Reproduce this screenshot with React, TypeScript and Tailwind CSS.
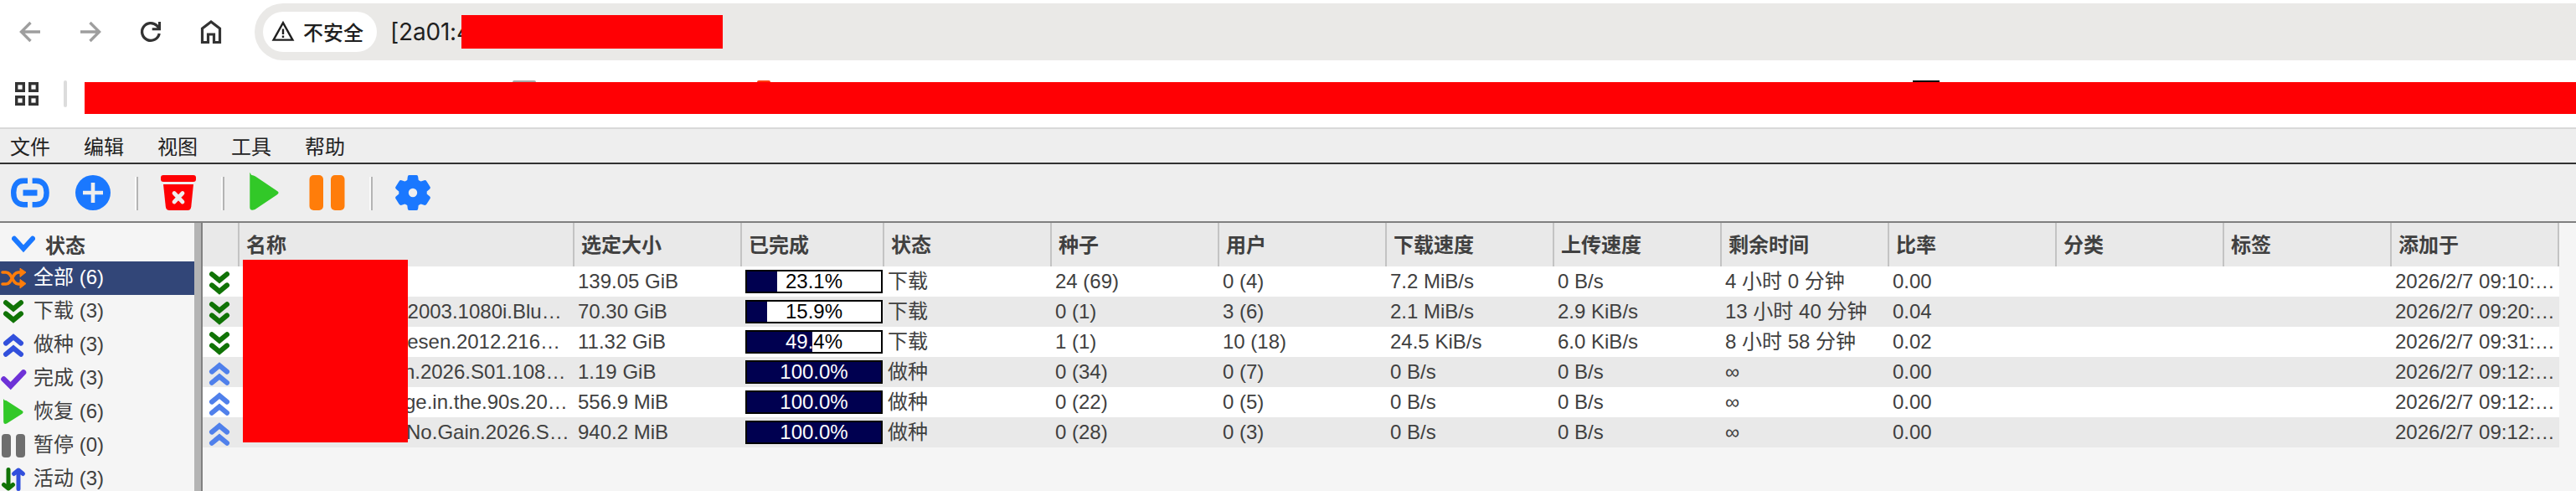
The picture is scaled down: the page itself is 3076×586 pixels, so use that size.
import type { ReactNode } from "react";

const MENUS = ["文件", "编辑", "视图", "工具", "帮助"];

type Torrent = {
  name: string;
  nameEnd: number;
  size: string;
  done: number;
  seeding: boolean;
  seeds: string;
  peers: string;
  down: string;
  up: string;
  eta: string;
  ratio: string;
  added: string;
};

const TORRENTS: Torrent[] = [
  { name: "", nameEnd: 8, size: "139.05 GiB", done: 23.1, seeding: false, seeds: "24 (69)", peers: "0 (4)", down: "7.2 MiB/s", up: "0 B/s", eta: "4 小时 0 分钟", ratio: "0.00", added: "2026/2/7 09:10:…" },
  { name: "2003.1080i.Blu…", nameEnd: 15.3, size: "70.30 GiB", done: 15.9, seeding: false, seeds: "0 (1)", peers: "3 (6)", down: "2.1 MiB/s", up: "2.9 KiB/s", eta: "13 小时 40 分钟", ratio: "0.04", added: "2026/2/7 09:20:…" },
  { name: "esen.2012.216…", nameEnd: 17, size: "11.32 GiB", done: 49.4, seeding: false, seeds: "1 (1)", peers: "10 (18)", down: "24.5 KiB/s", up: "6.0 KiB/s", eta: "8 小时 58 分钟", ratio: "0.02", added: "2026/2/7 09:31:…" },
  { name: "n.2026.S01.108…", nameEnd: 10.6, size: "1.19 GiB", done: 100, seeding: true, seeds: "0 (34)", peers: "0 (7)", down: "0 B/s", up: "0 B/s", eta: "∞", ratio: "0.00", added: "2026/2/7 09:12:…" },
  { name: "ge.in.the.90s.20…", nameEnd: 8.2, size: "556.9 MiB", done: 100, seeding: true, seeds: "0 (22)", peers: "0 (5)", down: "0 B/s", up: "0 B/s", eta: "∞", ratio: "0.00", added: "2026/2/7 09:12:…" },
  { name: "No.Gain.2026.S…", nameEnd: 6.2, size: "940.2 MiB", done: 100, seeding: true, seeds: "0 (28)", peers: "0 (3)", down: "0 B/s", up: "0 B/s", eta: "∞", ratio: "0.00", added: "2026/2/7 09:12:…" },
];

const HEADERS = ["", "名称", "选定大小", "已完成", "状态", "种子", "用户", "下载速度", "上传速度", "剩余时间", "比率", "分类", "标签", "添加于"];

const COLS =
  "grid w-[2814px] grid-cols-[44px_400px_200px_170px_200px_200px_200px_200px_200px_200px_200px_200px_200px_200px]";

function Svg({ w, h, children, className = "" }: { w: number; h: number; children: ReactNode; className?: string }) {
  return (
    <svg width={w} height={h} viewBox={`0 0 ${w} ${h}`} fill="none" className={`block shrink-0 ${className}`}>
      {children}
    </svg>
  );
}

function DoubleDown({ color }: { color: string }) {
  return (
    <Svg w={32} h={32}>
      <g stroke={color} strokeWidth="6" strokeLinecap="round">
        <path d="M7 5.2 L16 12.6 L25 5.2" />
        <path d="M7 18.4 L16 25.8 L25 18.4" />
      </g>
    </Svg>
  );
}

function DoubleUp({ color }: { color: string }) {
  return (
    <Svg w={32} h={32}>
      <g stroke={color} strokeWidth="6" strokeLinecap="round">
        <path d="M7 13.6 L16 6.2 L25 13.6" />
        <path d="M7 26.8 L16 19.4 L25 26.8" />
      </g>
    </Svg>
  );
}

function BrowserBar() {
  return (
    <div className="flex h-[76px] items-start bg-white pt-1">
      <div className="flex h-[68px] w-[304px] shrink-0 items-center gap-10 pl-[20px]">
        <Svg w={32} h={32}>
          <path d="M28 16 H6 M16.5 5 L5.5 16 L16.5 27" stroke="#9e9e9e" strokeWidth="3.4" />
        </Svg>
        <Svg w={32} h={32}>
          <path d="M4 16 H26 M15.5 5 L26.5 16 L15.5 27" stroke="#9e9e9e" strokeWidth="3.4" />
        </Svg>
        <Svg w={32} h={32}>
          <path d="M26.2 18 A10.4 10.4 0 1 1 23.4 8.7 L26.5 12" stroke="#333" strokeWidth="3.3" />
          <path d="M28 4 V14.3 H17.7 V11.3 H25 V4 Z" fill="#333" />
        </Svg>
        <Svg w={32} h={32}>
          <path d="M5.5 28.5 V12 L16 4 L26.5 12 V28.5 H19.5 V19 H12.5 V28.5 Z" stroke="#333" strokeWidth="3.2" />
        </Svg>
      </div>
      <div className="flex h-[68px] flex-1 items-center rounded-l-full bg-[#eae9e7] pl-[10px]">
        <div className="flex h-12 w-[136px] items-center rounded-full bg-white pl-[10px]">
          <Svg w={28} h={28} className="mr-[10px] -mt-[2px]">
            <path d="M2.6 24.6 L14 4.2 L25.4 24.6 Z" stroke="#1f1f1f" strokeWidth="2.4" />
            <path d="M14 11.5 V18 M14 19.6 V22" stroke="#1f1f1f" strokeWidth="2.4" />
          </Svg>
          <span className="whitespace-nowrap font-['Noto_Sans_CJK_SC',sans-serif] text-[24px] font-medium leading-[36px] text-[#1f1f1f]">
            不安全
          </span>
        </div>
        <div className="relative ml-[16px] w-[397px] font-[Inter,sans-serif] text-[28px] leading-[40px] tracking-[-0.2px] text-[#1f1f1f]">
          [2a01:4
          <div className="absolute left-[85px] top-0 h-10 w-[312px] bg-[#ff0004]" />
        </div>
      </div>
    </div>
  );
}

function BookmarkBar() {
  return (
    <div className="relative flex h-[78px] items-start border-b-2 border-[#d9d9d9] bg-white pl-[18px] pt-5">
      <Svg w={28} h={32}>
        <g stroke="#333" strokeWidth="3.4">
          <rect x="1.7" y="3.7" width="8.6" height="8.6" />
          <rect x="17.7" y="3.7" width="8.6" height="8.6" />
          <rect x="1.7" y="19.7" width="8.6" height="8.6" />
          <rect x="17.7" y="19.7" width="8.6" height="8.6" />
        </g>
      </Svg>
      <div className="ml-[30px] h-8 w-1 rounded-full bg-[#dcdcdc]" />
      <div className="ml-[21px] mt-[2px] h-[38px] flex-1 bg-[#ff0004]" />
      <div className="absolute left-[612px] top-5 h-[2px] w-[28px] rounded-t bg-[#a6a6a6]" />
      <div className="absolute left-[904px] top-5 h-[2px] w-[16px] rounded-t-full bg-[#ff3c10]" />
      <div className="absolute left-[2284px] top-5 h-[2px] w-[32px] bg-black" />
    </div>
  );
}

function Divider() {
  return <div className="h-10 w-1 shrink-0 border-l-2 border-r-2 border-l-[#fafafa] border-r-[#b4b4b4]" />;
}

function Toolbar() {
  return (
    <div className="flex h-[70px] items-start border-b-2 border-[#808080] bg-[#eee] pt-2">
      <Svg w={48} h={48} className="ml-3">
        <path d="M21 11.8 H16 C8 11.8 4.2 18 4.2 26 C4.2 34 8 40.2 16 40.2 H21" stroke="#1a78ff" strokeWidth="6.4" />
        <path d="M26.6 11.8 H31 C39.5 11.8 43.6 18 43.6 26 C43.6 34 39.5 40.2 31 40.2 H26.6" stroke="#1a78ff" strokeWidth="6.4" />
        <rect x="15.5" y="22.6" width="17" height="7" fill="#1a78ff" />
      </Svg>
      <Svg w={44} h={48} className="ml-[29px]">
        <circle cx="22" cy="26" r="21" fill="#1a78ff" />
        <path d="M10 26 H34 M22 14 V38" stroke="#eee" strokeWidth="4.6" />
      </Svg>
      <div className="ml-[28px] mt-[7px]">
        <Divider />
      </div>
      <Svg w={44} h={48} className="ml-[26px]">
        <rect x="1" y="5" width="42" height="8" rx="3" fill="#ff0004" />
        <path d="M4 16 H40 L37.3 42.5 Q36.8 47 33 47 H11.5 Q7.3 47 6.8 42.5 Z" fill="#ff0004" />
        <path d="M17 26.5 L27 37 M27 26.5 L17 37" stroke="#eee" strokeWidth="4.8" strokeLinecap="round" />
      </Svg>
      <div className="ml-[29px] mt-[7px]">
        <Divider />
      </div>
      <Svg w={38} h={48} className="ml-[28px]">
        <path d="M2.3 1.8 L4.3 5 Q6.5 4.8 9 6.5 L35 24 Q38.2 26 35 28.2 L8.5 46 Q2.6 48.5 2.3 43.5 Z" fill="#32c828" />
      </Svg>
      <Svg w={44} h={48} className="ml-[34px]">
        <rect x="1.5" y="5" width="16.5" height="42" rx="5" fill="#ff7d0a" />
        <rect x="27" y="5" width="16.5" height="42" rx="5" fill="#ff7d0a" />
      </Svg>
      <div className="ml-[29px] mt-[7px]">
        <Divider />
      </div>
      <Svg w={44} h={48} className="ml-[26px]">
        <path
          fillRule="evenodd"
          fill="#1a78ff"
          d="M17.5 5 H26.5 Q28 5 28.2 7 L28.7 11 L31.5 12.6 L35.5 11.2 Q37.5 10.8 38.5 12.5 L42.6 19 Q43.4 20.5 42 21.7 L38.7 24.4 V27.6 L42 30.3 Q43.4 31.5 42.6 33 L38.5 39.5 Q37.5 41.2 35.5 40.8 L31.5 39.4 L28.7 41 L28.2 45 Q28 47 26.5 47 H17.5 Q16 47 15.8 45 L15.3 41 L12.5 39.4 L8.5 40.8 Q6.5 41.2 5.5 39.5 L1.4 33 Q0.6 31.5 2 30.3 L5.3 27.6 V24.4 L2 21.7 Q0.6 20.5 1.4 19 L5.5 12.5 Q6.5 10.8 8.5 11.2 L12.5 12.6 L15.3 11 L15.8 7 Q16 5 17.5 5 Z M22 20.8 A5.2 5.2 0 1 0 22 31.2 A5.2 5.2 0 1 0 22 20.8 Z"
        />
      </Svg>
    </div>
  );
}

const FILTERS: { label: string; icon: ReactNode }[] = [
  {
    label: "全部 (6)",
    icon: (
      <Svg w={32} h={32}>
        <g stroke="#ff7d0a" strokeWidth="3.6" strokeLinecap="round">
          <path d="M3 9 H7 C15 9 14 23 22 23 H26" />
          <path d="M3 23 H7 C15 23 14 9 22 9 H26" />
        </g>
        <path d="M24 4.2 L31 9 L24 14.5 Z M24 17.5 L31 22.5 L24 28 Z" fill="#ff7d0a" stroke="#ff7d0a" strokeLinejoin="round" />
      </Svg>
    ),
  },
  { label: "下载 (3)", icon: <DoubleDown color="#107306" /> },
  { label: "做种 (3)", icon: <DoubleUp color="#3250dc" /> },
  {
    label: "完成 (3)",
    icon: (
      <Svg w={32} h={32}>
        <path d="M4.5 16.5 L12.7 24.5 L28 8.5" stroke="#6e32d7" strokeWidth="6.6" strokeLinecap="round" />
      </Svg>
    ),
  },
  {
    label: "恢复 (6)",
    icon: (
      <Svg w={32} h={32}>
        <path d="M4 0 L5.5 1.8 Q7.5 1.8 9 3 L26.5 14.3 Q28.7 16 26.5 17.7 L8 29.5 Q4.3 31 4.2 27.5 Z" fill="#32c828" />
      </Svg>
    ),
  },
  {
    label: "暂停 (0)",
    icon: (
      <Svg w={32} h={32}>
        <rect x="2" y="2" width="11" height="28" rx="4" fill="#6e6e6e" />
        <rect x="19" y="2" width="11" height="28" rx="4" fill="#6e6e6e" />
      </Svg>
    ),
  },
  {
    label: "活动 (3)",
    icon: (
      <Svg w={32} h={32}>
        <path d="M10 4.5 V26 M4.5 22.5 L10 27 L15.5 22.5" stroke="#107306" strokeWidth="5" strokeLinecap="round" strokeLinejoin="round" />
        <path d="M22 27.5 V6 M16.5 9.5 L22 5 L27.5 9.5" stroke="#3250dc" strokeWidth="5" strokeLinecap="round" strokeLinejoin="round" />
      </Svg>
    ),
  },
];

function Sidebar() {
  return (
    <div className="w-[232px] shrink-0 overflow-hidden">
      <div className="flex h-[46px] items-start pl-[14px]">
        <Svg w={28} h={38}>
          <path d="M3 18.8 L14 30.8 L25 18.8" stroke="#1a78ff" strokeWidth="6" strokeLinecap="round" />
        </Svg>
        <span className="ml-3 mt-[10px] font-bold leading-[36px]">状态</span>
      </div>
      {FILTERS.map((f, i) => (
        <div key={f.label} className={`flex h-10 items-start ${i === 0 ? "bg-[#324678] text-white" : ""}`}>
          <div className="mt-1">{f.icon}</div>
          <span className="ml-2 whitespace-nowrap leading-[37px]">{f.label}</span>
        </div>
      ))}
    </div>
  );
}

function Progress({ value }: { value: number }) {
  const fill = value >= 100 ? 160 : Math.round(value * 1.6 - 1);
  const label = `${value.toFixed(1)}%`;
  return (
    <div className="relative ml-1 mt-1 h-7 w-[164px] border-2 border-black bg-white text-center leading-6 text-black">
      {label}
      <div className="absolute left-0 top-0 h-6 overflow-hidden bg-[#000050]" style={{ width: fill }}>
        <div className="w-[160px] text-center text-white">{label}</div>
      </div>
    </div>
  );
}

function Cell({ children }: { children?: ReactNode }) {
  return <div className="overflow-hidden whitespace-nowrap pl-1 leading-[36px]">{children}</div>;
}

function TorrentTable() {
  return (
    <div className="relative flex-1 border-l-2 border-[#808080]">
      <div className={`${COLS} h-[52px] bg-[#e9e9e9] font-bold`}>
        {HEADERS.map((h, i) => (
          <div key={i} className="h-[52px] border-r-2 border-[#c3c3c3] pl-2 pt-px leading-[52px]">
            {h}
          </div>
        ))}
      </div>
      {TORRENTS.map((t, i) => (
        <div key={i} className={`${COLS} h-9 ${i % 2 ? "bg-[#e9e9e9]" : "bg-white"}`}>
          <div className="pl-1 pt-1">{t.seeding ? <DoubleUp color="#5080eb" /> : <DoubleDown color="#107306" />}</div>
          <div className="flex justify-end overflow-hidden whitespace-nowrap leading-[36px]">
            <span style={{ marginRight: t.nameEnd }}>{t.name}</span>
          </div>
          <Cell>{t.size}</Cell>
          <Progress value={t.done} />
          <Cell>{t.seeding ? "做种" : "下载"}</Cell>
          <Cell>{t.seeds}</Cell>
          <Cell>{t.peers}</Cell>
          <Cell>{t.down}</Cell>
          <Cell>{t.up}</Cell>
          <Cell>{t.eta}</Cell>
          <Cell>{t.ratio}</Cell>
          <Cell />
          <Cell />
          <Cell>{t.added}</Cell>
        </div>
      ))}
      <div className="absolute left-[48px] top-[44px] h-[218px] w-[197px] bg-[#ff0004]" />
    </div>
  );
}

export default function App() {
  return (
    <div className="flex h-[586px] w-[3076px] flex-col overflow-hidden bg-[#f5f5f5] font-['Liberation_Sans','Noto_Sans_CJK_SC',sans-serif] text-[24px] text-[#404040]">
      <BrowserBar />
      <BookmarkBar />
      <div className="flex h-[42px] shrink-0 gap-10 border-b-2 border-[#323232] bg-[#eee] pl-3 pt-[2px] leading-[40px] text-[#222]">
        {MENUS.map((m) => (
          <span key={m}>{m}</span>
        ))}
      </div>
      <Toolbar />
      <div className="flex min-h-0 flex-1">
        <Sidebar />
        <div className="w-2 shrink-0 bg-[#b4b4b4]" />
        <TorrentTable />
      </div>
    </div>
  );
}
